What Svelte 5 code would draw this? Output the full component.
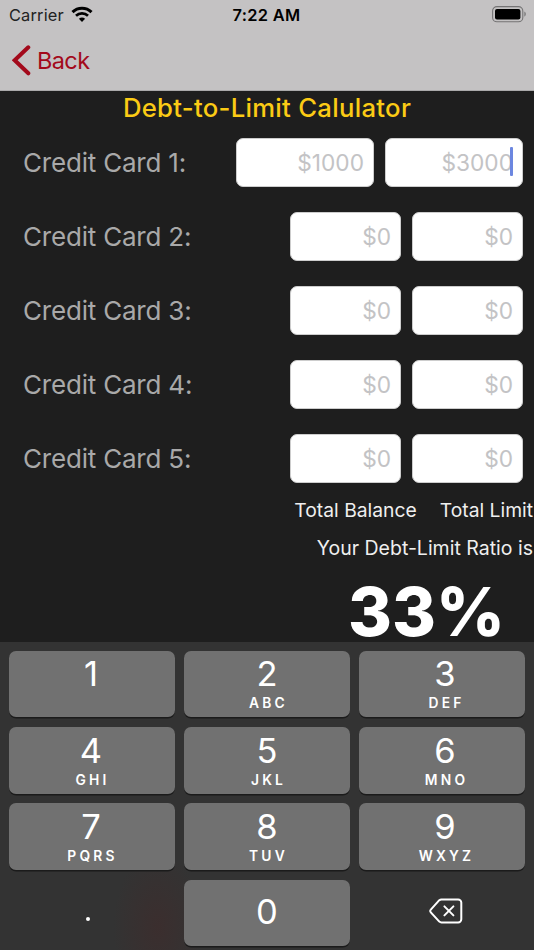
<script>
  let cards = [
    { name: "Credit Card 1:", balance: "$1000", limit: "$3000", wide: true },
    { name: "Credit Card 2:", balance: "$0", limit: "$0" },
    { name: "Credit Card 3:", balance: "$0", limit: "$0" },
    { name: "Credit Card 4:", balance: "$0", limit: "$0" },
    { name: "Credit Card 5:", balance: "$0", limit: "$0" },
  ];

  const keys = [
    { digit: "1", letters: "" },
    { digit: "2", letters: "ABC" },
    { digit: "3", letters: "DEF" },
    { digit: "4", letters: "GHI" },
    { digit: "5", letters: "JKL" },
    { digit: "6", letters: "MNO" },
    { digit: "7", letters: "PQRS" },
    { digit: "8", letters: "TUV" },
    { digit: "9", letters: "WXYZ" },
  ];
</script>

<div class="screen">
  <header>
    <div class="status-bar">
      <div class="carrier">
        <span>Carrier</span>
        <svg width="22" height="17" viewBox="0 0 22 17" fill="none" stroke="#000">
          <path d="M1.5 6.1a13.6 13.6 0 0 1 19 0" stroke-width="3" />
          <path d="M5 9.8a8.6 8.6 0 0 1 12 0" stroke-width="2.7" />
          <path d="M7.9 12.8a4.6 4.6 0 0 1 6.2 0L11 16z" fill="#000" stroke="none" />
        </svg>
      </div>
      <span class="time">7:22 AM</span>
      <div class="battery">
        <svg width="35" height="17" viewBox="0 0 35 17">
          <rect x="0.6" y="0.6" width="30.2" height="15.2" rx="4.4" fill="none" stroke="#747374" stroke-width="1.1" />
          <rect x="3" y="3" width="25.4" height="10.4" rx="2" fill="#000" />
          <path d="M32.4 5.6c1.9 1 1.9 4.2 0 5.2z" fill="#747374" />
        </svg>
      </div>
    </div>
    <div class="nav-bar">
      <svg width="19" height="31" viewBox="0 0 19 31" fill="none">
        <path d="M16.3 2.3 2.7 15.3l13.6 13" stroke="#a3091b" stroke-width="4" stroke-linecap="round" />
      </svg>
      <span class="back">Back</span>
    </div>
  </header>

  <main>
    <h1>Debt-to-Limit Calulator</h1>
    <div class="cards">
      {#each cards as card, i}
        <div class="card" class:wide={card.wide}>
          <label for="balance{i}">{card.name}</label>
          <input id="balance{i}" placeholder={card.balance} />
          <div class="limit">
            <input placeholder={card.limit} aria-label="{card.name} limit" />
            {#if i === 0}
              <span class="caret"></span>
            {/if}
          </div>
        </div>
      {/each}
    </div>
    <div class="totals">
      <span>Total Balance</span>
      <span>Total Limit</span>
    </div>
    <p class="ratio-label">Your Debt-Limit Ratio is</p>
    <div class="ratio">33%</div>
  </main>

  <div class="keyboard">
    {#each keys as key}
      <button class="key">
        <span class="digit">{key.digit}</span>
        {#if key.letters}
          <span class="letters">{key.letters}</span>
        {/if}
      </button>
    {/each}
    <button class="key plain"><span class="dot"></span></button>
    <button class="key zero"><span class="digit">0</span></button>
    <button class="key plain" aria-label="delete">
      <svg width="34" height="26" viewBox="0 0 34 26" fill="none" stroke="#fff" stroke-width="2" stroke-linecap="round" stroke-linejoin="round">
        <path d="M12.4 1.4h16.7a3.2 3.2 0 0 1 3.2 3.2v16.6a3.2 3.2 0 0 1-3.2 3.2H12.4c-.8 0-1.5-.3-2.1-.8L1.8 14.3c-.8-.8-.8-1.9 0-2.7l8.5-9.4c.6-.5 1.3-.8 2.1-.8z" />
        <path d="m15.4 8.4 9 9M24.4 8.4l-9 9" />
      </svg>
    </button>
  </div>
</div>

<style>
  :global(body) {
    background: #1e1e1e;
  }

  .screen {
    width: 534px;
    height: 950px;
    display: flex;
    flex-direction: column;
    overflow: hidden;
    background: #1e1e1e;
    font-family: "Inter", "Liberation Sans", sans-serif;
  }

  header {
    height: 91px;
    box-sizing: border-box;
    background: #c4c2c3;
    border-bottom: 1px solid #aaa9aa;
    flex: none;
  }

  .status-bar {
    height: 29px;
    display: grid;
    grid-template-columns: 1fr auto 1fr;
    align-items: center;
    padding: 0 7px 0 9px;
    font-size: 16.4px;
    color: #000;
  }

  .carrier {
    display: flex;
    align-items: center;
    gap: 7px;
    color: #222;
    letter-spacing: 0.15px;
  }

  .time {
    margin-right: 3px;
    font-weight: 600;
    letter-spacing: 0.35px;
  }

  .battery {
    display: flex;
    justify-content: flex-end;
  }

  .nav-bar {
    height: 62px;
    display: flex;
    align-items: center;
    gap: 6px;
    padding-left: 12px;
  }

  .back {
    font-size: 23.5px;
    letter-spacing: -0.6px;
    color: #a3091b;
  }

  main {
    height: 551px;
    flex: none;
  }

  h1 {
    margin: 0;
    height: 33px;
    line-height: 33px;
    font-size: 25.7px;
    font-weight: 500;
    letter-spacing: 0.28px;
    text-align: center;
    color: #fbcb15;
  }

  .cards {
    display: flex;
    flex-direction: column;
    gap: 25px;
    padding: 14px 11px 0 23px;
  }

  .card {
    height: 49px;
    display: flex;
    align-items: center;
    gap: 11px;
  }

  .card label {
    flex: 1;
    font-size: 26px;
    letter-spacing: -0.2px;
    color: #a9a9a9;
  }

  .card input {
    width: 111px;
    height: 49px;
    box-sizing: border-box;
    display: block;
    padding: 0 9px 1px;
    border: 1px solid #cdcdcd;
    border-radius: 7px;
    background: #fff;
    font-family: inherit;
    font-size: 22.7px;
    text-align: right;
  }

  .wide input {
    width: 138px;
  }

  input::placeholder {
    color: #c3c3c5;
    opacity: 1;
  }

  .limit {
    position: relative;
  }

  .caret {
    position: absolute;
    top: 9px;
    right: 10px;
    width: 3px;
    height: 29px;
    border-radius: 1px;
    background: #6c87e0;
  }

  .totals {
    display: flex;
    justify-content: flex-end;
    gap: 23px;
    margin-top: 15px;
    padding-right: 1px;
    height: 25px;
    line-height: 25px;
    font-size: 19.3px;
    color: #efefef;
  }

  .ratio-label {
    margin: 13px 0 0;
    padding-right: 1px;
    height: 25px;
    line-height: 25px;
    font-size: 19.5px;
    text-align: right;
    color: #efefef;
  }

  .ratio {
    margin-top: 14px;
    padding-right: 29px;
    line-height: 74px;
    font-size: 67px;
    font-weight: 800;
    text-align: right;
    color: #fff;
  }

  .keyboard {
    flex: 1;
    display: grid;
    grid-template-columns: repeat(3, 166px);
    grid-template-rows: 66px 67px 67px 66px;
    gap: 9.5px 9px;
    padding: 9px 9px 0;
    background:
      radial-gradient(ellipse 45px 75px at 158px 285px, #3b2e2e, transparent),
      #333;
  }

  .key {
    display: flex;
    flex-direction: column;
    align-items: center;
    padding: 2px 0 0;
    border: none;
    border-radius: 7px;
    background: #717171;
    box-shadow: 0 1.5px 0 #1b1b1b;
    font-family: inherit;
    color: #fff;
  }

  .key:nth-child(3n + 1) {
    padding-right: 2px;
  }

  .key:nth-child(3n) {
    padding-left: 6px;
  }

  .digit {
    height: 42px;
    line-height: 42px;
    font-size: 34.5px;
    font-weight: 400;
  }

  .letters {
    height: 16px;
    line-height: 16px;
    padding-left: 3px;
    font-size: 13.8px;
    font-weight: 600;
    letter-spacing: 3.2px;
  }

  .key:nth-child(n + 4) {
    padding-top: 3px;
  }

  .key.zero {
    justify-content: center;
    padding: 0 0 2px;
  }

  .key.plain {
    justify-content: center;
    padding: 0 0 3px 8px;
    background: none;
    box-shadow: none;
  }

  .dot {
    width: 4px;
    height: 4px;
    margin: 16px 16px 0 0;
    border-radius: 50%;
    background: #fff;
  }
</style>
